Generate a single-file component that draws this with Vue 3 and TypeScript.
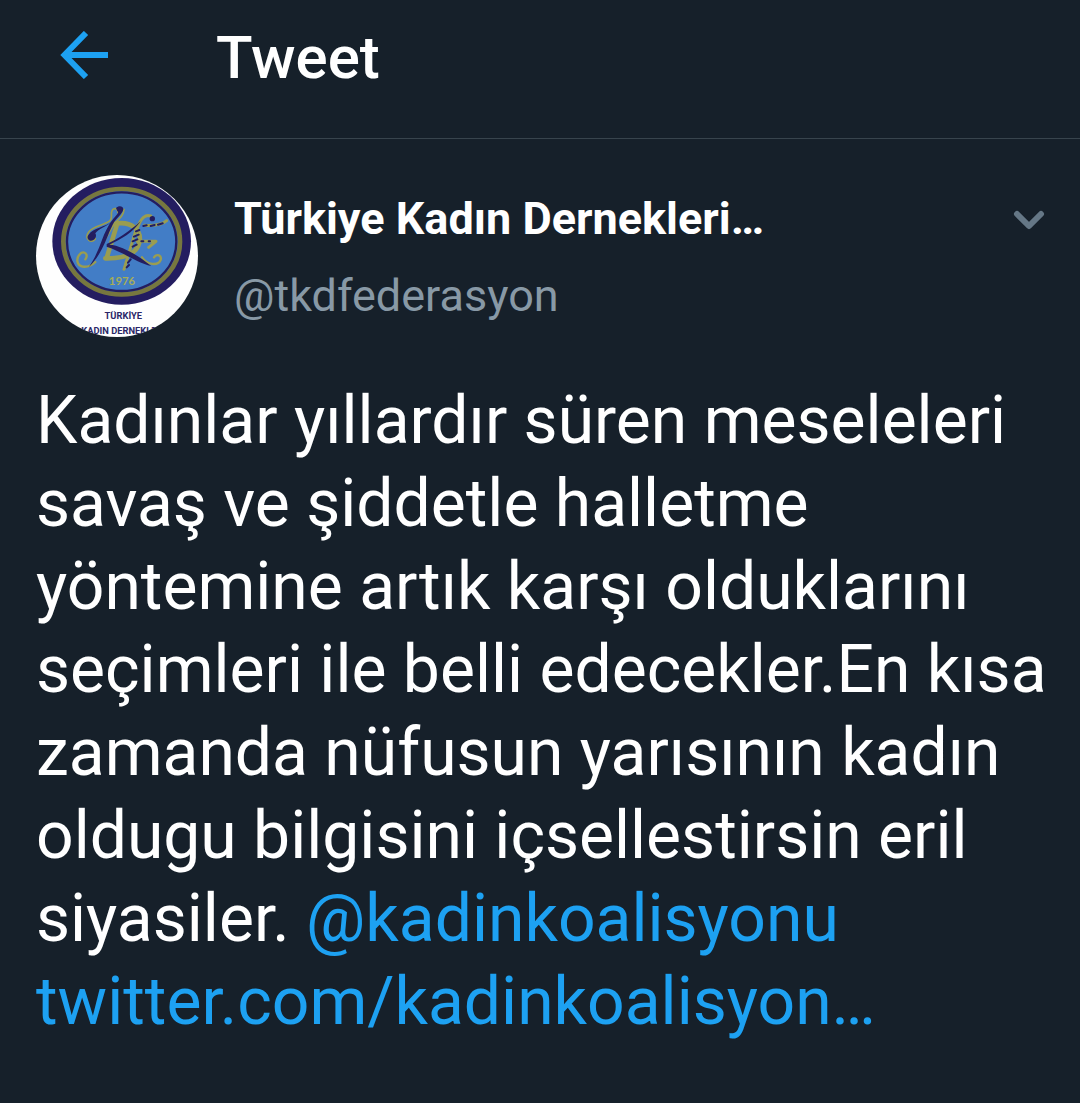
<script setup lang="ts">
interface Author {
  name: string
  handle: string
}

const author: Author = {
  name: 'Türkiye Kadın Dernekleri…',
  handle: '@tkdfederasyon',
}

const body: string =
  'Kadınlar yıllardır süren meseleleri savaş ve şiddetle halletme yöntemine artık karşı olduklarını seçimleri ile belli edecekler.En kısa zamanda nüfusun yarısının kadın oldugu bilgisini içsellestirsin eril siyasiler.'
</script>

<template>
  <div class="screen">
    <header class="bar">
      <button class="icon-button back" type="button" aria-label="Back">
        <svg width="48" height="48" viewBox="0 0 48 48" fill="none" stroke="#1da1f2" stroke-width="6">
          <path d="M26 2 4.500 24 26 46M4 24H48" />
        </svg>
      </button>
      <h1 class="title">Tweet</h1>
    </header>

    <article class="tweet">
      <div class="author">
        <svg class="avatar" viewBox="18 15 486 486" role="img" aria-label="Türkiye Kadın Dernekleri">
          <defs>
            <clipPath id="avatar-clip"><circle cx="261" cy="258" r="243" /></clipPath>
          </defs>
          <g clip-path="url(#avatar-clip)">
            <rect x="18" y="15" width="486" height="486" fill="#fefefe" />
            <ellipse cx="275" cy="214" rx="208" ry="190" fill="#241d60" />
            <ellipse cx="275" cy="215" rx="175" ry="158" fill="#427dc6" stroke="#77773f" stroke-width="14" />
            <ellipse cx="275" cy="215" rx="164" ry="148" fill="none" stroke="#241d60" stroke-width="7" />
            <g fill="none" stroke="#9a9d50" stroke-linecap="round" stroke-linejoin="round">
              <path stroke-width="14" d="M262 160 230 264M250 162C308 150 336 184 328 218 320 250 286 266 226 265" />
              <path stroke-width="9" d="M322 166 282 298M322 214H378L356 232M322 176C332 142 348 132 362 138M344 166C372 168 396 164 410 152" />
              <path stroke-width="7" d="M166 268C176 254 164 242 152 250 136 264 140 286 158 290 174 292 186 286 196 276M336 262C352 286 384 288 392 270 396 256 380 250 372 262" />
              <path stroke-width="5" d="M264 128C264 114 250 112 246 122 240 136 250 142 240 152 218 168 190 168 176 186 162 206 184 224 196 206M282 118C280 144 260 150 252 162L210 236" />
            </g>
            <g fill="#241d60">
              <path d="M258 114C266 106 280 108 280 118 278 132 260 142 248 164 236 188 228 214 216 236 204 260 192 276 176 292 194 266 206 238 216 210 224 188 234 166 250 146 262 134 268 126 262 124Z" />
              <path d="M248 154C226 172 206 176 196 190 202 200 194 212 182 212 172 210 170 200 176 194 190 174 224 172 248 154Z" />
              <path d="M332 154C308 188 274 208 238 224 276 226 326 258 364 288 322 280 284 248 230 230V222C264 208 298 184 332 154Z" />
            </g>
            <path fill="none" stroke="#241d60" stroke-width="6" stroke-linecap="round" d="M318 184 328 180M312 200 326 194M308 214 322 208M308 230 320 224M334 214H340M356 214H360M294 278 302 268M290 292 297 285M340 168 350 166M362 168 374 165M384 164 398 160" />
            <circle cx="367" cy="146" r="8" fill="#241d60" />
            <text class="year" x="276" y="345" text-anchor="middle">1976</text>
            <text class="org" x="280" y="446" text-anchor="middle">TÜRKİYE</text>
            <text class="org" x="280" y="491" text-anchor="middle">KADIN DERNEKLERİ</text>
          </g>
        </svg>
        <div class="names">
          <h2 class="name">{{ author.name }}</h2>
          <span class="handle">{{ author.handle }}</span>
        </div>
        <button class="icon-button more" type="button" aria-label="More options">
          <svg width="32" height="20" viewBox="0 0 32 20" fill="none" stroke="#657786" stroke-width="6" stroke-linecap="round" stroke-linejoin="round">
            <path d="M4 4 16 16 28 4" />
          </svg>
        </button>
      </div>

      <p class="text">
        {{ body }}
        <a href="#kadinkoalisyonu">@kadinkoalisyonu</a>
        {{ ' ' }}<a href="#link">twitter.com/kadinkoalisyon…</a>
      </p>
    </article>
  </div>
</template>

<style>
body {
  margin: 0;
  background: #16202a;
}
</style>

<style scoped>
.screen {
  min-height: 100vh;
  background: #16202a;
  color: #fff;
  font-family: Roboto, "Noto Sans", sans-serif;
}

.bar {
  display: flex;
  align-items: center;
  gap: 108px;
  padding: 22px 60px 44px;
  border-bottom: 1px solid #38444d;
}

.icon-button {
  display: flex;
  padding: 0;
  border: 0;
  background: none;
  cursor: pointer;
}

.back {
  margin-bottom: 6px;
}

.title {
  margin: 0;
  font-size: 60px;
  line-height: 72px;
  font-weight: 500;
}

.tweet {
  padding: 36px 24px 36px 36px;
}

.author {
  display: flex;
  align-items: flex-start;
  gap: 36px;
}

.avatar {
  flex: none;
  width: 162px;
  height: 162px;
}

.year {
  fill: #a5ad58;
  font: 700 34px Lato, sans-serif;
}

.org {
  fill: #2b2768;
  font: 700 28px Roboto, sans-serif;
}

.names {
  flex: 1;
  min-width: 0;
  padding-top: 17px;
}

.name {
  margin: 0 0 23px;
  font-size: 45px;
  line-height: 54px;
  font-weight: 700;
  white-space: nowrap;
}

.handle {
  display: block;
  color: #8899a6;
  font-size: 45px;
  line-height: 54px;
}

.more {
  padding: 35px 11px 0 0;
}

.text {
  margin: 42px 0 0;
  font-size: 66px;
  line-height: 83px;
  overflow-wrap: break-word;
}

.text a {
  color: #1da1f2;
  text-decoration: none;
}
</style>
